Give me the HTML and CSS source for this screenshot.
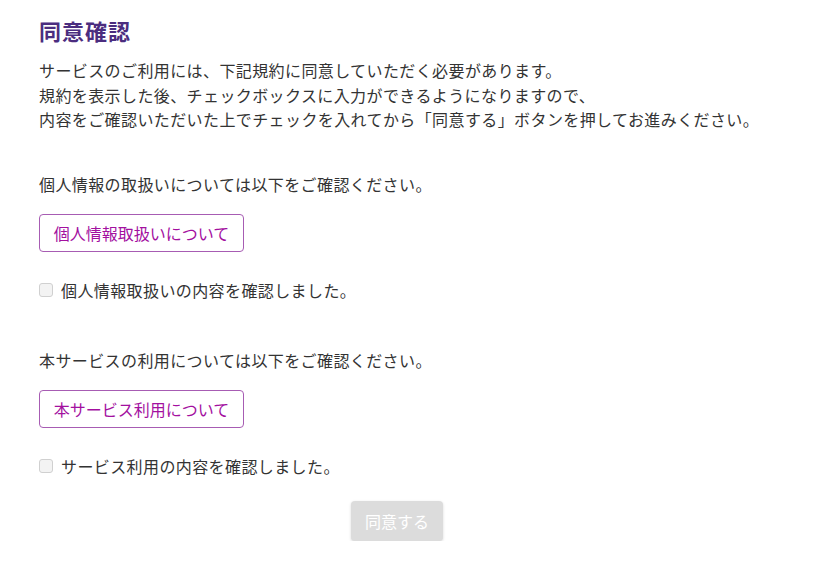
FILE: index.html
```
<!DOCTYPE html>
<html lang="ja">
<head>
    <meta charset="UTF-8">
    <title>同意確認</title>
    <link rel="stylesheet" href="styles.css">
</head>
<body>
    <div class="container">
        <h1 class="title">同意確認</h1>
        <p class="lead">サービスのご利用には、下記規約に同意していただく必要があります。<br>
        規約を表示した後、チェックボックスに入力ができるようになりますので、<br>
        内容をご確認いただいた上でチェックを入れてから「同意する」ボタンを押してお進みください。</p>

        <div class="section">
            <p class="section-text">個人情報の取扱いについては以下をご確認ください。</p>
            <button class="link-btn">個人情報取扱いについて</button>
            <label class="check"><input type="checkbox" disabled> 個人情報取扱いの内容を確認しました。</label>
        </div>

        <div class="section">
            <p class="section-text">本サービスの利用については以下をご確認ください。</p>
            <button class="link-btn">本サービス利用について</button>
            <label class="check"><input type="checkbox" disabled> サービス利用の内容を確認しました。</label>
        </div>

        <div class="actions">
            <button class="agree-btn" disabled>同意する</button>
        </div>
    </div>
</body>
</html>
```

FILE: styles.css
```
body {
    margin: 0;
    font-family: "Noto Sans CJK JP", "Noto Sans", sans-serif;
    color: #333;
    background: #fff;
}

.container {
    width: 716px;
    margin-left: 39px;
    padding-top: 16px;
}

.title {
    font-size: 22px;
    font-weight: bold;
    letter-spacing: 1px;
    color: #4b2d7f;
    margin: 0 0 14px;
    line-height: 28px;
}

.lead {
    font-size: 16px;
    letter-spacing: 0.4px;
    line-height: 24.5px;
    white-space: nowrap;
    margin: 0 0 40px;
}

.section {
    margin-bottom: 48px;
}

.section-text {
    font-size: 16px;
    letter-spacing: 0.4px;
    line-height: 24px;
    margin: 0 0 18px;
}

.link-btn {
    font-family: inherit;
    font-size: 16px;
    color: #a3109f;
    background: #fff;
    border: 1px solid #a75cb3;
    border-radius: 4px;
    padding: 0;
    height: 38px;
    width: 205px;
    cursor: pointer;
    display: block;
    margin-bottom: 28px;
}

.check {
    display: flex;
    align-items: center;
    font-size: 16px;
    letter-spacing: 0.4px;
    line-height: 20px;
    gap: 6px;
}

.check input {
    appearance: none;
    width: 14px;
    height: 14px;
    margin: 0 2px 0 0;
    border: 1px solid #d0d0d0;
    border-radius: 3px;
    background: #f3f3f3;
}

.actions {
    display: flex;
    justify-content: center;
    margin-top: -23px;
}

.agree-btn {
    font-family: inherit;
    font-size: 16px;
    color: #fff;
    background: #dcdcdc;
    border: none;
    border-radius: 4px;
    width: 92px;
    height: 40px;
    box-shadow: 0 1px 3px rgba(0, 0, 0, 0.15);
}
```
